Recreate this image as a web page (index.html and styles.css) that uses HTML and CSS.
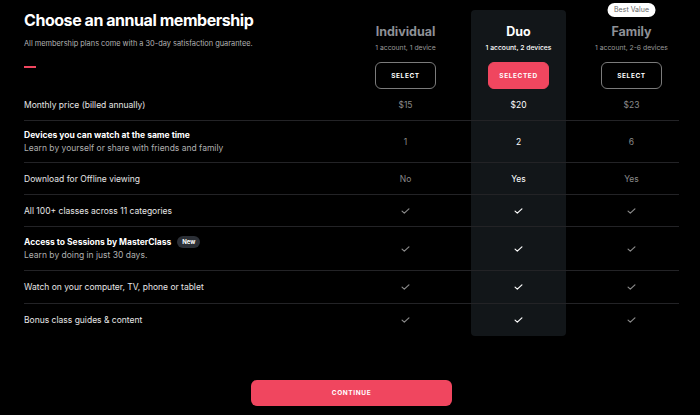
FILE: index.html
```html
<!DOCTYPE html>
<html>
<head>
<meta charset="utf-8">
<link rel="stylesheet" href="styles.css">
</head>
<body>
<div class="page">
  <div class="table">
    <div class="row head">
      <div class="intro">
        <h1 class="title">Choose an annual membership</h1>
        <p class="subtitle">All membership plans come with a 30-day satisfaction guarantee.</p>
        <div class="dash"></div>
      </div>
      <div class="plan">
        <div class="plan-name">Individual</div>
        <div class="plan-sub">1 account, 1 device</div>
        <button class="btn-select">SELECT</button>
      </div>
      <div class="plan duo">
        <div class="plan-name">Duo</div>
        <div class="plan-sub">1 account, 2 devices</div>
        <button class="btn-select selected">SELECTED</button>
      </div>
      <div class="plan family">
        <span class="badge">Best Value</span>
        <div class="plan-name">Family</div>
        <div class="plan-sub">1 account, 2-6 devices</div>
        <button class="btn-select">SELECT</button>
      </div>
    </div>

    <div class="row r32">
      <div class="label">Monthly price (billed annually)</div>
      <div class="cell">$15</div>
      <div class="cell duo">$20</div>
      <div class="cell">$23</div>
    </div>
    <div class="row r42">
      <div class="label"><div class="strong">Devices you can watch at the same time</div><div class="sub">Learn by yourself or share with friends and family</div></div>
      <div class="cell">1</div>
      <div class="cell duo">2</div>
      <div class="cell">6</div>
    </div>
    <div class="row r32">
      <div class="label">Download for Offline viewing</div>
      <div class="cell">No</div>
      <div class="cell duo">Yes</div>
      <div class="cell">Yes</div>
    </div>
    <div class="row r32">
      <div class="label">All 100+ classes across 11 categories</div>
      <div class="cell"><svg class="check" viewBox="0 0 10 7"><polyline points="1,3.6 3.6,6 9,1"/></svg></div>
      <div class="cell duo"><svg class="check" viewBox="0 0 10 7"><polyline points="1,3.6 3.6,6 9,1"/></svg></div>
      <div class="cell"><svg class="check" viewBox="0 0 10 7"><polyline points="1,3.6 3.6,6 9,1"/></svg></div>
    </div>
    <div class="row r44">
      <div class="label"><div class="strong">Access to Sessions by MasterClass <span class="new">New</span></div><div class="sub">Learn by doing in just 30 days.</div></div>
      <div class="cell"><svg class="check" viewBox="0 0 10 7"><polyline points="1,3.6 3.6,6 9,1"/></svg></div>
      <div class="cell duo"><svg class="check" viewBox="0 0 10 7"><polyline points="1,3.6 3.6,6 9,1"/></svg></div>
      <div class="cell"><svg class="check" viewBox="0 0 10 7"><polyline points="1,3.6 3.6,6 9,1"/></svg></div>
    </div>
    <div class="row r33">
      <div class="label">Watch on your computer, TV, phone or tablet</div>
      <div class="cell"><svg class="check" viewBox="0 0 10 7"><polyline points="1,3.6 3.6,6 9,1"/></svg></div>
      <div class="cell duo"><svg class="check" viewBox="0 0 10 7"><polyline points="1,3.6 3.6,6 9,1"/></svg></div>
      <div class="cell"><svg class="check" viewBox="0 0 10 7"><polyline points="1,3.6 3.6,6 9,1"/></svg></div>
    </div>
    <div class="row r32 last">
      <div class="label">Bonus class guides &amp; content</div>
      <div class="cell"><svg class="check" viewBox="0 0 10 7"><polyline points="1,3.6 3.6,6 9,1"/></svg></div>
      <div class="cell duo"><svg class="check" viewBox="0 0 10 7"><polyline points="1,3.6 3.6,6 9,1"/></svg></div>
      <div class="cell"><svg class="check" viewBox="0 0 10 7"><polyline points="1,3.6 3.6,6 9,1"/></svg></div>
    </div>
  </div>
  <div class="footer">
    <button class="btn-continue">CONTINUE</button>
  </div>
</div>
</body>
</html>
```

FILE: styles.css
```css
* { box-sizing: border-box; }
html, body {
  margin: 0;
  padding: 0;
  background: #000;
  width: 700px;
  height: 415px;
  overflow: hidden;
}
body {
  font-family: Inter, "Noto Sans", sans-serif;
  color: #fff;
}
.page {
  padding: 0 21px 0 24px;
}
.table {
  display: flex;
  flex-direction: column;
}
.row {
  display: grid;
  grid-template-columns: 316px 95px 95px 95px;
  column-gap: 18px;
  border-bottom: 1px solid #232326;
}
.row.head { border-bottom: none; height: 89px; }
.row.last { border-bottom: none; }
.r32 { height: 32px; }
.r33 { height: 33px; }
.r42 { height: 42px; }
.r44 { height: 44px; }

.intro { padding-top: 9px; }
.title {
  margin: 0;
  font-size: 16px;
  line-height: 22px;
  font-weight: 700;
  letter-spacing: -0.45px;
  color: #fff;
}
.subtitle {
  margin: 7px 0 0;
  font-size: 7.4px;
  line-height: 12px;
  color: #b4b4b4;
}
.dash {
  margin-top: 16px;
  width: 12px;
  height: 2px;
  background: #f0465f;
}

.plan {
  margin-top: 10px;
  padding-top: 14px;
  display: flex;
  flex-direction: column;
  align-items: center;
  position: relative;
}
.plan.duo {
  background: #121619;
  border-radius: 4px 4px 0 0;
}
.plan-name {
  font-size: 12.5px;
  line-height: 16px;
  font-weight: 700;
  color: #8e9096;
}
.plan-sub {
  margin-top: 3px;
  font-size: 6.8px;
  line-height: 10px;
  color: #9a9a9a;
}
.duo .plan-name, .duo .plan-sub { color: #fff; }
.duo .plan-sub { font-weight: 500; }
.btn-select {
  margin-top: 9px;
  width: 61px;
  height: 27px;
  border: 1.5px solid #7b7b7b;
  border-radius: 6px;
  background: transparent;
  color: #fff;
  font-family: inherit;
  font-size: 6.5px;
  font-weight: 700;
  letter-spacing: 0.6px;
  padding: 0;
}
.btn-select.selected {
  background: #f0465f;
  border-color: #f0465f;
}
.badge {
  position: absolute;
  top: -7px;
  left: 50%;
  transform: translateX(-50%);
  background: #fff;
  color: #666;
  font-size: 7px;
  line-height: 14px;
  height: 14px;
  padding: 0 7px;
  border-radius: 7px;
  white-space: nowrap;
}

.label {
  display: flex;
  flex-direction: column;
  justify-content: center;
  font-size: 8.5px;
  line-height: 12px;
  color: #e6e6e6;
}
.strong { font-weight: 700; color: #fff; display: flex; align-items: center; }
.sub { color: #b0b0b0; margin-top: 1px; }
.new {
  display: inline-block;
  margin-left: 6px;
  background: #2b2f36;
  color: #fff;
  font-size: 6px;
  line-height: 12px;
  height: 12px;
  padding: 0 5px;
  border-radius: 6px;
  font-weight: 700;
}
.cell {
  display: flex;
  align-items: center;
  justify-content: center;
  font-size: 8.5px;
  color: #8a8a8a;
}
.cell.duo {
  background: #121619;
  color: #fff;
}
.row.last .cell.duo { border-radius: 0 0 4px 4px; }
.check {
  width: 9px;
  height: 6px;
  fill: none;
  stroke: #8a8a8a;
  stroke-width: 1.4;
  stroke-linecap: round;
  stroke-linejoin: round;
}
.duo .check { stroke: #fff; }

.footer {
  display: flex;
  justify-content: center;
  margin-top: 44px;
}
.btn-continue {
  width: 201px;
  height: 26px;
  border: none;
  border-radius: 6px;
  background: #f0465f;
  color: #fff;
  font-family: inherit;
  font-size: 6.5px;
  font-weight: 700;
  letter-spacing: 0.6px;
  padding: 0;
}
```
